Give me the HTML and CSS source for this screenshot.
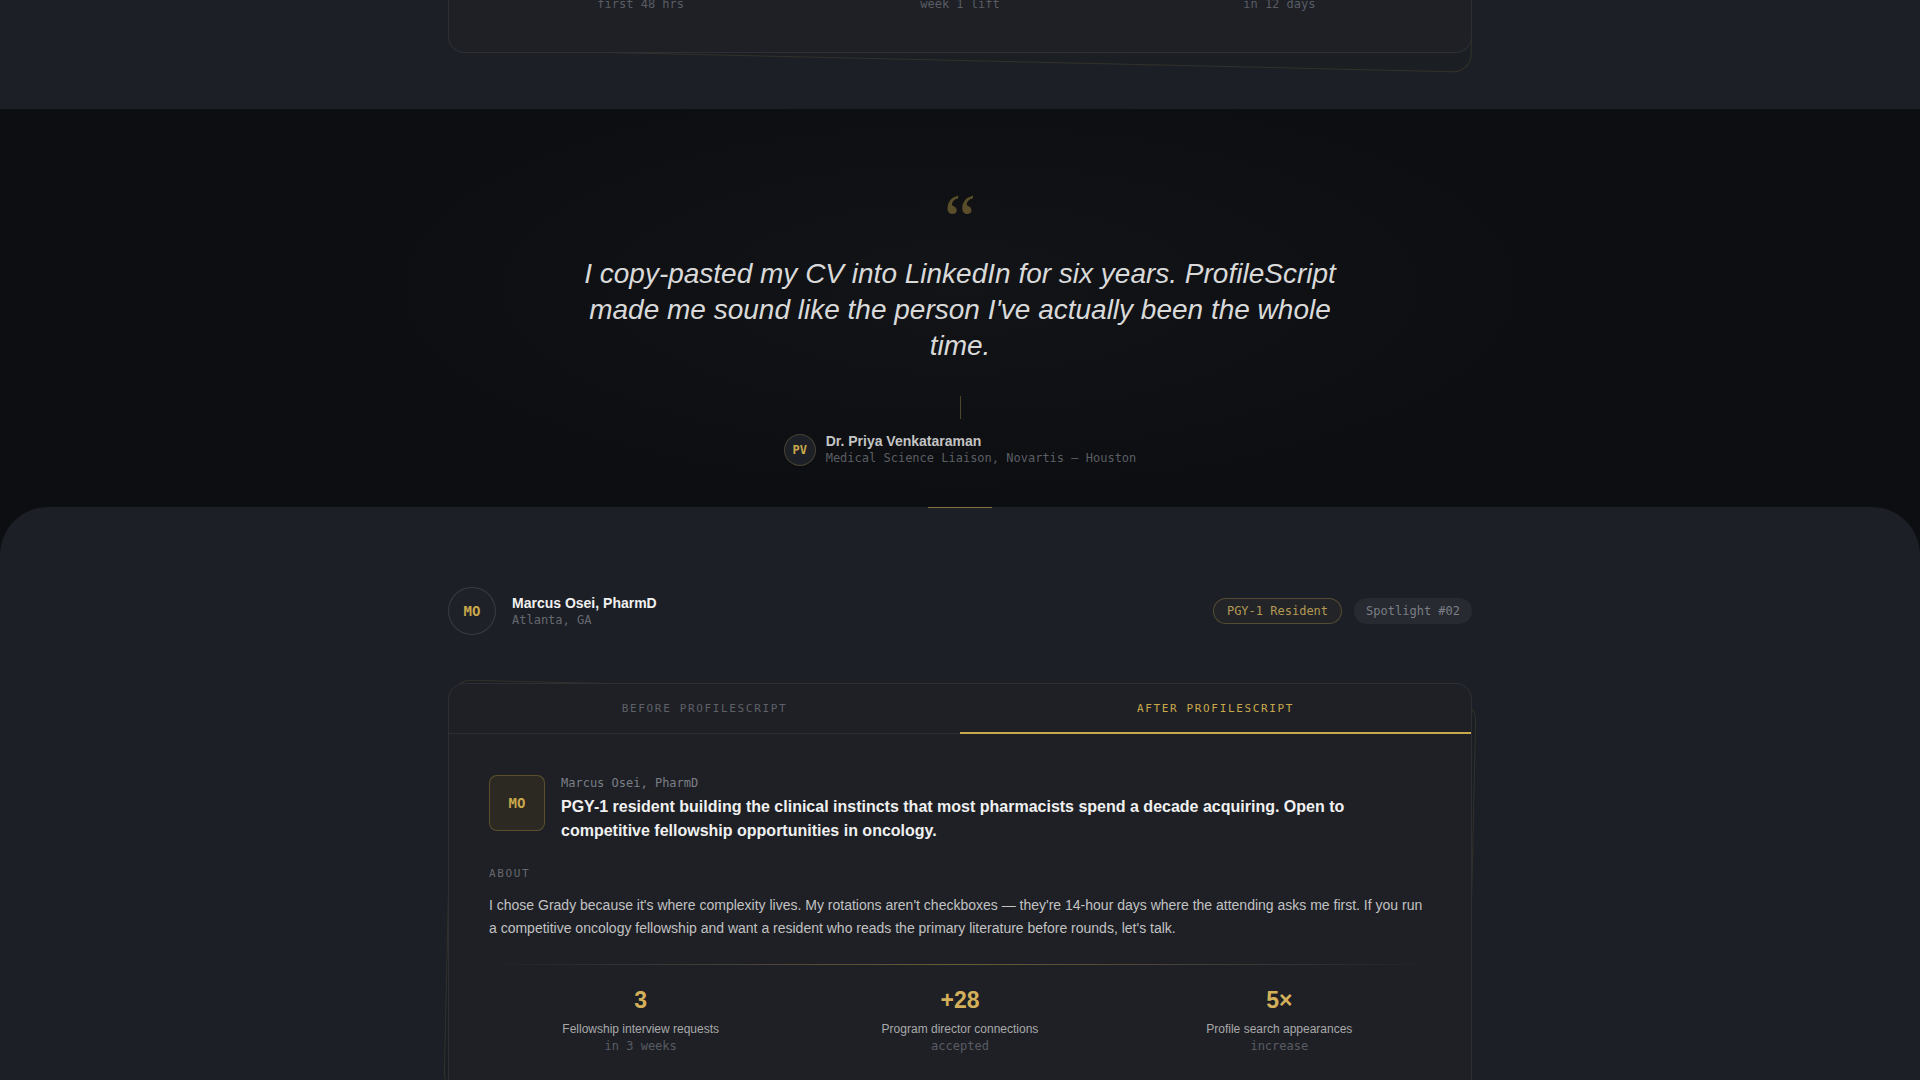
FILE: index.html
```html
<!DOCTYPE html>
<html lang="en">
<head>
    <meta charset="UTF-8">
    <meta name="viewport" content="width=device-width, initial-scale=1.0">
    <title>ProfileScript — Spotlights</title>
    <link rel="stylesheet" href="styles.css">
</head>
<body>

<!-- tail of the previous spotlight card -->
<section class="band">
    <div class="wrap">
        <div class="card card-tail">
            <div class="stats">
                <div class="stat"><div class="stat-sub">first 48 hrs</div></div>
                <div class="stat"><div class="stat-sub">week 1 lift</div></div>
                <div class="stat"><div class="stat-sub">in 12 days</div></div>
            </div>
        </div>
    </div>
</section>

<section class="quote">
    <div class="quote-mark">&ldquo;</div>
    <p class="quote-text">I copy-pasted my CV into LinkedIn for six years. ProfileScript made me sound like the person I've actually been the whole time.</p>
    <div class="quote-rule"></div>
    <div class="author">
        <div class="author-avatar">PV</div>
        <div>
            <div class="author-name">Dr. Priya Venkataraman</div>
            <div class="author-role">Medical Science Liaison, Novartis — Houston</div>
        </div>
    </div>
</section>

<section class="spotlight">
    <div class="wrap">
        <div class="person">
            <div class="person-left">
                <div class="person-avatar">MO</div>
                <div class="person-info">
                    <div class="person-name">Marcus Osei, PharmD</div>
                    <div class="person-city">Atlanta, GA</div>
                </div>
            </div>
            <div class="badges">
                <span class="badge badge-gold">PGY-1 Resident</span>
                <span class="badge">Spotlight #02</span>
            </div>
        </div>

        <div class="card">
            <div class="tabs">
                <div class="tab">Before ProfileScript</div>
                <div class="tab active">After ProfileScript</div>
            </div>
            <div class="card-body">
                <div class="profile">
                    <div class="profile-avatar">MO</div>
                    <div>
                        <div class="profile-name">Marcus Osei, PharmD</div>
                        <div class="profile-headline">PGY-1 resident building the clinical instincts that most pharmacists spend a decade acquiring. Open to competitive fellowship opportunities in oncology.</div>
                    </div>
                </div>

                <div class="label">About</div>
                <p class="about">I chose Grady because it's where complexity lives. My rotations aren't checkboxes — they're 14-hour days where the attending asks me first. If you run a competitive oncology fellowship and want a resident who reads the primary literature before rounds, let's talk.</p>

                <div class="divider"></div>

                <div class="stats">
                    <div class="stat">
                        <div class="stat-num">3</div>
                        <div class="stat-label">Fellowship interview requests</div>
                        <div class="stat-sub">in 3 weeks</div>
                    </div>
                    <div class="stat">
                        <div class="stat-num">+28</div>
                        <div class="stat-label">Program director connections</div>
                        <div class="stat-sub">accepted</div>
                    </div>
                    <div class="stat">
                        <div class="stat-num">5×</div>
                        <div class="stat-label">Profile search appearances</div>
                        <div class="stat-sub">increase</div>
                    </div>
                </div>
            </div>
        </div>
    </div>
</section>

</body>
</html>
```

FILE: styles.css
```css
body {
    margin: 0;
    background-color: #0c0e11;
    color: #d0d0d0;
    font-family: "Liberation Sans", Arial, sans-serif;
    overflow: hidden;
}
.wrap {
    width: 1024px;
    margin: 0 auto;
}

/* cards, with the skewed sheet behind them */
.card {
    position: relative;
    background-color: #1e2026;
    border: 1px solid rgba(255, 255, 255, 0.07);
    border-radius: 16px;
}
.card::before {
    content: "";
    position: absolute;
    inset: -1px;
    z-index: -1;
    background-color: #1b1e23;
    border: 1px solid rgba(201, 168, 76, 0.14);
    border-radius: 18px;
    transform: translateY(8px) rotate(1.3deg);
}

/* top band */
.band {
    isolation: isolate;
    background-color: #1c1f26;
    padding-bottom: 56px;
}
.card-tail {
    margin-top: -4px;
    border-top: none;
    border-radius: 0 0 16px 16px;
    padding: 0 40px 40px;
}

/* quote */
.quote {
    position: relative;
    padding: 75px 0 40px;
    text-align: center;
    background: radial-gradient(ellipse 900px 320px at 50% 45%, rgba(255, 255, 255, 0.025), transparent 70%), #0c0e11;
}
.quote-mark {
    font-family: "Liberation Serif", Georgia, serif;
    font-size: 72px;
    line-height: 1;
    height: 72px;
    color: rgba(201, 168, 76, 0.4);
}
.quote-text {
    max-width: 780px;
    margin: 0 auto;
    font-size: 28px;
    font-style: italic;
    line-height: 36px;
    color: #d9d9d9;
}
.quote-rule {
    width: 1px;
    height: 23px;
    margin: 32px auto 14px;
    background-color: rgba(201, 168, 76, 0.35);
}
.author {
    display: flex;
    justify-content: center;
    align-items: center;
    gap: 10px;
    text-align: left;
}
.author-avatar {
    width: 30px;
    height: 30px;
    border-radius: 50%;
    border: 1px solid rgba(201, 168, 76, 0.25);
    background-color: #1d2027;
    color: #c9a84c;
    font-family: "DejaVu Sans Mono", monospace;
    font-size: 12px;
    font-weight: bold;
    display: flex;
    align-items: center;
    justify-content: center;
}
.author-name {
    font-size: 14px;
    font-weight: bold;
    line-height: 17px;
    color: #c4c4c4;
}
.author-role {
    font-family: "DejaVu Sans Mono", monospace;
    font-size: 12px;
    line-height: 17px;
    color: #5b5e64;
}

/* spotlight */
.spotlight {
    position: relative;
    isolation: isolate;
    background-color: #1c1f26;
    border-radius: 48px 48px 0 0;
    padding: 80px 0 80px;
}
.spotlight::before {
    content: "";
    position: absolute;
    top: 0;
    left: 50%;
    width: 64px;
    height: 1px;
    margin-left: -32px;
    background-color: rgba(201, 168, 76, 0.6);
}
.person {
    display: flex;
    justify-content: space-between;
    align-items: center;
    margin-bottom: 48px;
}
.person-left {
    display: flex;
    align-items: center;
    gap: 16px;
}
.person-info {
    padding-top: 2px;
}
.person-avatar {
    width: 46px;
    height: 46px;
    border-radius: 50%;
    border: 1px solid rgba(255, 255, 255, 0.12);
    background-color: #1e2128;
    color: #c9a84c;
    font-family: "DejaVu Sans Mono", monospace;
    font-size: 14px;
    font-weight: bold;
    display: flex;
    align-items: center;
    justify-content: center;
}
.person-name {
    font-size: 14px;
    font-weight: bold;
    line-height: 17px;
    color: #f0f0f0;
}
.person-city {
    font-family: "DejaVu Sans Mono", monospace;
    font-size: 12px;
    line-height: 17px;
    color: #666970;
}
.badges {
    display: flex;
    gap: 12px;
}
.badge {
    font-family: "DejaVu Sans Mono", monospace;
    font-size: 12px;
    line-height: 24px;
    padding: 0 11px;
    border-radius: 13px;
    border: 1px solid transparent;
    background-color: rgba(255, 255, 255, 0.05);
    color: #7b7e85;
}
.badge-gold {
    padding: 0 13px;
    background-color: rgba(201, 168, 76, 0.04);
    border-color: rgba(201, 168, 76, 0.3);
    color: #b39a55;
}

.tabs {
    display: grid;
    grid-template-columns: 1fr 1fr;
    border-bottom: 1px solid rgba(255, 255, 255, 0.06);
}
.tab {
    padding: 17px 0 15px;
    margin-bottom: -1px;
    border-bottom: 2px solid transparent;
    text-align: center;
    font-family: "DejaVu Sans Mono", monospace;
    font-size: 11px;
    line-height: 16px;
    letter-spacing: 0.15em;
    text-transform: uppercase;
    color: #5e6167;
}
.tab.active {
    border-bottom-color: #c9a84c;
    color: #c9a84c;
}
.card-body {
    padding: 41px 40px 40px;
}
.profile {
    display: flex;
    gap: 16px;
}
.profile-avatar {
    flex: none;
    width: 54px;
    height: 54px;
    border-radius: 8px;
    border: 1px solid rgba(201, 168, 76, 0.3);
    background-color: #2b2922;
    color: #c9a84c;
    font-family: "DejaVu Sans Mono", monospace;
    font-size: 14px;
    font-weight: bold;
    display: flex;
    align-items: center;
    justify-content: center;
}
.profile-name {
    font-family: "DejaVu Sans Mono", monospace;
    font-size: 12px;
    line-height: 16px;
    color: #7b7e85;
}
.profile-headline {
    margin-top: 4px;
    font-size: 16px;
    font-weight: bold;
    line-height: 24px;
    color: #f0f0f0;
}
.label {
    margin-top: 23px;
    font-family: "DejaVu Sans Mono", monospace;
    font-size: 11px;
    line-height: 16px;
    letter-spacing: 0.15em;
    text-transform: uppercase;
    color: #666970;
}
.about {
    margin: 12px 0 0;
    font-size: 14px;
    line-height: 23px;
    color: #c2c2c2;
}
.divider {
    height: 1px;
    margin-top: 24px;
    background: linear-gradient(90deg, transparent, rgba(255, 255, 255, 0.07) 12%, rgba(201, 168, 76, 0.45) 50%, rgba(255, 255, 255, 0.07) 88%, transparent);
}
.stats {
    display: grid;
    grid-template-columns: repeat(3, 1fr);
    margin: 0 -8px;
    text-align: center;
}
.card-body .stats {
    padding-top: 20px;
}
.stat-num {
    font-size: 23px;
    font-weight: bold;
    line-height: 30px;
    color: #d4b05a;
}
.stat-label {
    margin-top: 6px;
    font-size: 12px;
    line-height: 17px;
    color: #a9a9a9;
}
.stat-sub {
    font-family: "DejaVu Sans Mono", monospace;
    font-size: 12px;
    line-height: 16px;
    color: #595c63;
}
```
